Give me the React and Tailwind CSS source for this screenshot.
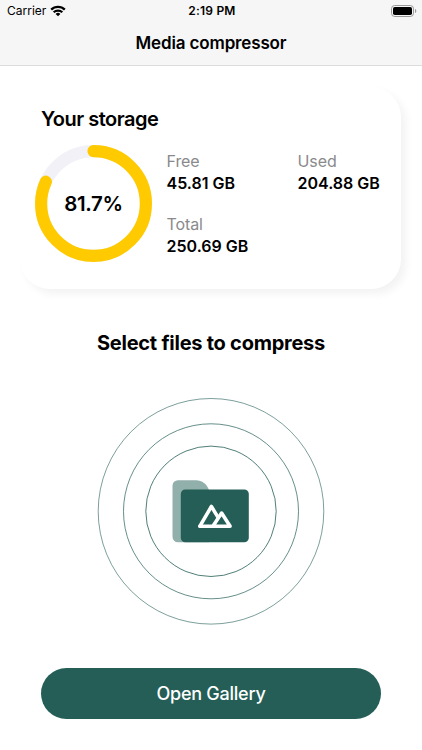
const storage = {
  percent: 81.7,
  free: '45.81 GB',
  used: '204.88 GB',
  total: '250.69 GB',
};

const StatusBar = () => (
  <div className="grid h-[22px] grid-cols-3 items-center pl-[7px] pr-[5px] text-[12px] leading-none">
    <div className="flex items-center gap-[4px]">
      <span>Carrier</span>
      <svg width="16" height="12" viewBox="0 0 16 12" fill="none" stroke="#000" strokeWidth="2.3">
        <path d="M1.2 4.6a9.6 9.6 0 0 1 13.6 0" />
        <path d="M3.7 7.3a6.1 6.1 0 0 1 8.6 0" />
        <path d="M8 11.3L5.6 8.9a3.4 3.4 0 0 1 4.8 0z" fill="#000" stroke="none" />
      </svg>
    </div>
    <span className="text-center text-[12px] font-semibold tracking-[0.2px]">2:19 PM</span>
    <svg className="justify-self-end" width="26" height="12" viewBox="0 0 26 12">
      <rect x="0.5" y="0.5" width="22" height="11" rx="3.2" fill="none" stroke="#999" />
      <rect x="2" y="2" width="19" height="8" rx="1.8" fill="#000" />
      <path d="M24 4v4c.8-.3 1.3-1 1.3-2s-.5-1.7-1.3-2z" fill="#999" />
    </svg>
  </div>
);

const StorageRing = ({ percent }) => {
  const radius = 52.4;
  const length = 2 * Math.PI * radius;

  return (
    <div className="grid size-[117px] shrink-0 place-items-center">
      <svg className="col-start-1 row-start-1 -rotate-90" width="117" height="117" viewBox="0 0 117 117" fill="none" strokeWidth="12.2">
        <circle cx="58.5" cy="58.5" r={radius} stroke="#f1f1f7" />
        <circle
          cx="58.5"
          cy="58.5"
          r={radius}
          stroke="#ffcb00"
          strokeLinecap="round"
          strokeDasharray={`${(length * percent) / 100} ${length}`}
        />
      </svg>
      <span className="col-start-1 row-start-1 pt-px text-[20.5px] font-semibold tracking-[-0.4px]">{percent}%</span>
    </div>
  );
};

const Stat = ({ label, value }) => (
  <div>
    <p className="text-[16px] leading-[22px] tracking-[-0.1px] text-[#8a8a8c]">{label}</p>
    <p className="whitespace-nowrap text-[16px] font-semibold leading-[23px]">{value}</p>
  </div>
);

const FolderIcon = () => (
  <svg className="col-start-1 row-start-1 mr-[2px] mt-[2px]" width="77" height="64" viewBox="0 0 77 64">
    <path d="M6 0.2H24C30 0.2 35 4 37 10V62.3H6A5.5 5.5 0 0 1 0.5 56.8V5.7A5.5 5.5 0 0 1 6 0.2Z" fill="#91afab" />
    <rect x="8.8" y="9.5" width="68" height="52.8" rx="4.5" fill="#245e57" />
    <g fill="none" stroke="#fff" strokeWidth="3.6" strokeLinejoin="round" strokeLinecap="round">
      <path d="M27.9 46.2L39.4 26.5L45.9 37.1" />
      <path d="M27.9 46.2H58.1L49.6 33.1L41.2 45.7" />
    </g>
  </svg>
);

const App = () => {
  return (
    <div className="flex h-[750px] w-[422px] flex-col overflow-hidden bg-white font-['Inter',sans-serif] text-black">
      <header className="h-[66px] shrink-0 border-b border-[#dcdcdc] bg-[#f6f6f6]">
        <StatusBar />
        <h1 className="text-center text-[17px] font-semibold leading-[43px] tracking-[-0.15px]">Media compressor</h1>
      </header>

      <section className="ml-[20px] mt-[21px] h-[202px] w-[381px] shrink-0 rounded-[30px] bg-white pl-[15px] pt-[17px] shadow-[5px_5px_8px_rgba(0,0,0,0.05)]">
        <h2 className="pl-[6px] text-[20px] font-semibold leading-[30px] tracking-[-0.5px]">Your storage</h2>
        <div className="mt-[11px] flex">
          <StorageRing percent={storage.percent} />
          <div className="ml-[14.5px] mt-[5px] grid grid-cols-[131px_auto] content-start gap-y-[18px]">
            <Stat label="Free" value={storage.free} />
            <Stat label="Used" value={storage.used} />
            <Stat label="Total" value={storage.total} />
          </div>
        </div>
      </section>

      <h2 className="mt-[38px] text-center text-[20px] font-bold leading-[32px] tracking-[-0.25px]">Select files to compress</h2>

      <div className="mt-[38px] grid shrink-0 place-items-center">
        <svg className="col-start-1 row-start-1" width="228" height="228" viewBox="0 0 228 228" fill="none" stroke="#245e57">
          <circle cx="114" cy="114.3" r="112.8" strokeWidth="0.6" />
          <circle cx="114" cy="114.3" r="87.5" strokeWidth="0.7" />
          <circle cx="114" cy="114.3" r="65.2" strokeWidth="0.8" />
        </svg>
        <FolderIcon />
      </div>

      <button className="mx-[41px] mt-[43px] h-[51px] shrink-0 rounded-full bg-[#245e57] text-[18px] font-medium tracking-[-0.25px] text-white">
        Open Gallery
      </button>
    </div>
  );
};

export default App;
